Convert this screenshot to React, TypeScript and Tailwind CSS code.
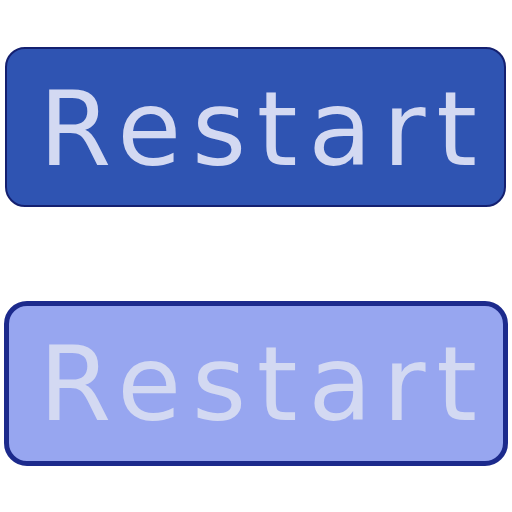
const RestartButton = ({ variant }: { variant: "active" | "disabled" }) => {
  const styles =
    variant === "active"
      ? "ml-[5px] w-[501px] h-[160px] rounded-[20px] border-2 border-[#142070] bg-[#2f54b2] pl-[32px] pt-[28px]"
      : "ml-[4px] w-[504px] h-[165px] rounded-[23px] border-[5px] border-[#1c2a8c] bg-[#97a6f0] pl-[30px] pt-[26px]";

  return (
    <div className={styles}>
      <span
        className="block text-[104px] leading-[104px] tracking-[10.7px] text-[#d3d9f2] whitespace-nowrap"
        style={{ fontFamily: '"DejaVu Sans", Verdana, sans-serif' }}
      >
        Restart
      </span>
    </div>
  );
};

export default function App() {
  return (
    <div className="w-[512px] h-[512px] bg-white overflow-hidden">
      <div className="pt-[47px] flex flex-col gap-[94px]">
        <RestartButton variant="active" />
        <RestartButton variant="disabled" />
      </div>
    </div>
  );
}
